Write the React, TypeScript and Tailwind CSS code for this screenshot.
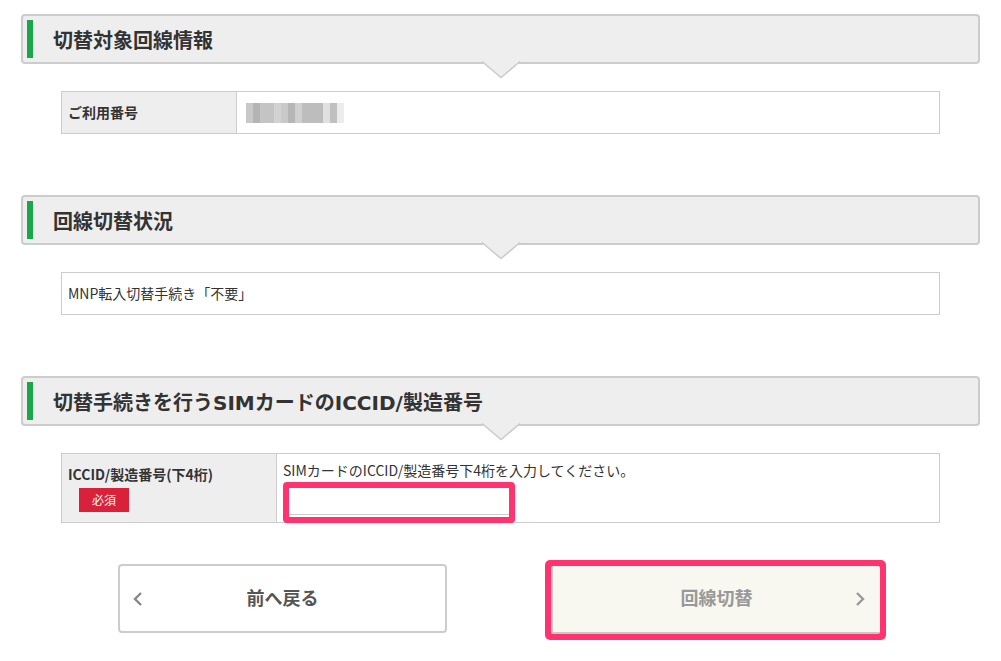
import React from 'react'

const FONT = { fontFamily: '"Noto Sans CJK JP", "Liberation Sans", sans-serif' }
const TITLE_FONT = { fontFamily: '"DejaVu Sans", "Noto Sans CJK JP", sans-serif' }

function SectionHeader({ title }: { title: string }) {
  return (
    <div className="relative h-[50px] rounded-[4px] border-2 border-[#cccccc] bg-[#eeeeee] flex items-center">
      <div className="ml-[4px] h-[38px] w-[6px] bg-[#1ca64c]" />
      <h2 className="ml-[20px] mt-[3px] text-[20px] font-bold text-[#333333]" style={TITLE_FONT}>
        {title}
      </h2>
      {/* speech arrow */}
      <svg
        className="absolute left-1/2 -translate-x-1/2 top-full -mt-[2px]"
        width="40"
        height="19"
        viewBox="0 0 40 19"
      >
        <polygon points="0,0 40,0 20,18" fill="#eeeeee" />
        <polyline points="1,1.5 20,17.5 39,1.5" fill="none" stroke="#cccccc" strokeWidth="1.6" />
      </svg>
    </div>
  )
}

function Blurred() {
  const blocks = [
    ['w-[7px]', 'bg-[#c8c8c8]'],
    ['w-[7px]', 'bg-[#b4b4b4]'],
    ['w-[14px]', 'bg-[#c4c4c4]'],
    ['w-[7px]', 'bg-[#d2d2d2]'],
    ['w-[7px]', 'bg-[#c9c9c9]'],
    ['w-[7px]', 'bg-[#b6b6b6]'],
    ['w-[7px]', 'bg-[#cfcfcf]'],
    ['w-[21px]', 'bg-[#bdbdbd]'],
    ['w-[7px]', 'bg-[#e0e0e0]'],
    ['w-[7px]', 'bg-[#c0c0c0]'],
    ['w-[7px]', 'bg-[#ececec]'],
  ]
  return (
    <div className="flex h-[20px]">
      {blocks.map(([w, c], i) => (
        <div key={i} className={`${w} ${c} h-full`} />
      ))}
    </div>
  )
}

export default function App() {
  return (
    <div className="w-[1001px] h-[661px] bg-white overflow-hidden" style={FONT}>
      <div className="px-[21px] pt-[14px]">
        {/* Section 1 */}
        <SectionHeader title="切替対象回線情報" />
        <div className="mx-[40px] mt-[27px] h-[43px] border border-[#cccccc] flex">
          <div className="w-[175px] bg-[#eeeeee] border-r border-[#cccccc] flex items-center pl-[6px]">
            <span className="text-[14px] font-bold text-[#333333]">ご利用番号</span>
          </div>
          <div className="flex-1 flex items-center pl-[9px]">
            <Blurred />
          </div>
        </div>

        {/* Section 2 */}
        <div className="mt-[61px]">
          <SectionHeader title="回線切替状況" />
        </div>
        <div className="mx-[40px] mt-[27px] h-[43px] border border-[#cccccc] flex items-center pl-[6px]">
          <span className="text-[14px] text-[#333333]">MNP転入切替手続き「不要」</span>
        </div>

        {/* Section 3 */}
        <div className="mt-[61px]">
          <SectionHeader title="切替手続きを行うSIMカードのICCID/製造番号" />
        </div>
        <div className="mx-[40px] mt-[27px] h-[70px] border border-[#cccccc] flex">
          <div className="w-[215px] bg-[#eeeeee] border-r border-[#cccccc] pl-[6px] pt-[11px]">
            <div className="text-[14px] leading-[18px] font-bold text-[#333333]">ICCID/製造番号(下4桁)</div>
            <div className="mt-[5px] ml-[11px] w-[50px] h-[24px] bg-[#d9213a] flex items-center justify-center">
              <span className="text-[12px] text-white">必須</span>
            </div>
          </div>
          <div className="flex-1 pl-[6px] pt-[7px]">
            <div className="text-[14px] leading-[18px] text-[#333333]">
              SIMカードのICCID/製造番号下4桁を入力してください。
            </div>
            <div className="mt-[3px] w-[232px] h-[41px] rounded-[4px] border-[6px] border-[#ff3370] bg-white">
              <input className="w-full h-[27px] border-b border-[#cccccc] outline-none bg-white" />
            </div>
          </div>
        </div>

        {/* Buttons */}
        <div className="mt-[37px] ml-[97px] flex items-start gap-[98px]">
          <button className="mt-[4px] w-[329px] h-[69px] rounded-[4px] border-2 border-[#cccccc] bg-white flex items-center px-[12px]">
            <svg width="12" height="16" viewBox="0 0 12 16" className="shrink-0">
              <polyline points="9,2 3,8 9,14" fill="none" stroke="#888888" strokeWidth="2.4" />
            </svg>
            <span className="flex-1 text-center pr-[12px] text-[18px] font-bold text-[#555555] -mt-[3px]">前へ戻る</span>
          </button>
          <div className="w-[341px] h-[80px] rounded-[5px] bg-[#ff3370] p-[6px]">
            <button className="w-full h-full rounded-[2px] border-l-2 border-b-2 border-[#c8c8c8] bg-[#f8f7f0] flex items-center px-[14px]">
              <span className="flex-1 text-center pl-[12px] text-[18px] font-bold text-[#999999] -mt-[3px]">回線切替</span>
              <svg width="12" height="16" viewBox="0 0 12 16" className="shrink-0">
                <polyline points="3,2 9,8 3,14" fill="none" stroke="#999999" strokeWidth="2.4" />
              </svg>
            </button>
          </div>
        </div>
      </div>
    </div>
  )
}
